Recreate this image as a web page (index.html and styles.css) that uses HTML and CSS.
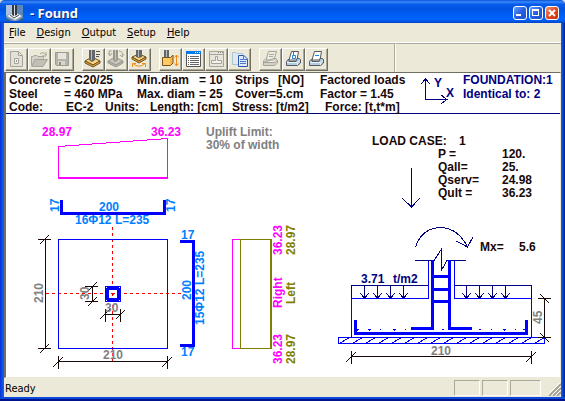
FILE: index.html
```html
<!DOCTYPE html>
<html lang="en">
<head>
<meta charset="utf-8">
<title>- Found</title>
<link rel="stylesheet" href="styles.css">
</head>
<body>
<div class="window">
  <header class="titlebar">
    <svg class="app-icon" width="17" height="16" viewBox="0 0 17 16" aria-hidden="true">
      <rect width="17" height="16" fill="#5b86b8"/>
      <path d="M0 0H7V7L0 11Z" fill="#a9c2dd"/><path d="M0 16V13L5 16ZM12 16L17 13V16Z" fill="#2d5c98"/>
      <path d="M1 11L8 7L16 11L9 15Z" fill="#f4f4f4"/><path d="M1 11L9 15L16 11V12L9 16L1 12Z" fill="#a8aeb5"/>
      <path d="M6 0H11V10L8 11L6 10Z" fill="#303840"/><path d="M8 0H9V11H8Z" fill="#cfd6dc"/>
      <path d="M4 10L8 13L13 10" fill="none" stroke="#46505a"/>
    </svg>
    <h1 class="title">- Found</h1>
    <div class="caption-buttons">
      <button class="caption" aria-label="Minimize"><svg width="12" height="12" viewBox="0 0 12 12"><path d="M2 7H7V9H2Z" fill="#fff"/></svg></button>
      <button class="caption" aria-label="Maximize"><svg width="12" height="12" viewBox="0 0 12 12"><path d="M2 2H9V9H2ZM3 4V8H8V4Z" fill="#fff" fill-rule="evenodd"/></svg></button>
      <button class="caption close" aria-label="Close"><svg width="12" height="12" viewBox="0 0 12 12"><path d="M3 3L9 9M9 3L3 9" stroke="#fff" stroke-width="2"/></svg></button>
    </div>
  </header>

  <nav class="menu">
    <a href="#"><u>F</u>ile</a>
    <a href="#"><u>D</u>esign</a>
    <a href="#"><u>O</u>utput</a>
    <a href="#"><u>S</u>etup</a>
    <a href="#"><u>H</u>elp</a>
  </nav>

  <div class="toolbar">
    <div class="tools">
      <div class="group">
        <button class="tool" aria-label="New"><svg width="21" height="21" viewBox="1 1 21 21"><path d="M5.500 3.500H13.500L17.500 7.500V18.500H5.500ZM13.500 3.500V7.500H17.500" fill="#e4e2d8" stroke="#a5a49c"/><path d="M9.500 10.500H13.500V15.500H9.500Z" fill="#f2f1ea" stroke="#a5a49c"/><path d="M11 12H12V14H11Z" fill="#999"/></svg></button>
        <button class="tool" aria-label="Open"><svg width="21" height="21" viewBox="1 1 21 21"><path d="M3.500 17V8.500H5L6 7.500H9L10 8.500H15.500V10.500" fill="#d4d2c8" stroke="#a5a49c"/><path d="M3.500 18.500L7 11.500H19.500L15 18.500Z" fill="#c2c0b6" stroke="#a5a49c"/><path d="M12 6Q15 3 18 7M18 4V8H14" fill="none" stroke="#a5a49c"/></svg></button>
        <button class="tool" aria-label="Save"><svg width="21" height="21" viewBox="1 1 21 21"><path d="M4.500 4.500H17.500V17.500H5.500L4.500 16.500Z" fill="#b5b4ab" stroke="#9c9b93"/><path d="M7 5H15V11H7Z" fill="#e8e6dc"/><path d="M7 13H14V17H7Z" fill="#d8d6cc"/><path d="M8 14H10V17H8Z" fill="#8f8e87"/></svg></button>
      </div>
      <div class="group">
        <button class="tool" aria-label="Footing data"><svg width="21" height="21" viewBox="1 1 21 21"><path d="M3 13L10 9L18 13L11 17Z" fill="#ffd27a" stroke="#6c5420"/><path d="M3 13V15L11 19L18 15V13L11 17Z" fill="#e9a63c" stroke="#6c5420"/><path d="M7 2H13V12L10 14L7 12Z" fill="#62676b"/><path d="M9.500 2V12" stroke="#b8bcbd"/><path d="M14 3.500H18M14 6.500H18M14 8.500H17" stroke="#555"/></svg></button>
        <button class="tool" aria-label="Loads"><svg width="21" height="21" viewBox="1 1 21 21"><path d="M3 13L10 9L18 13L11 17Z" fill="#c8c6bd" stroke="#9b9a93"/><path d="M3 13V15L11 19L18 15V13L11 17Z" fill="#b5b3aa" stroke="#9b9a93"/><path d="M8 2H13V12L10 14L8 12Z" fill="#98978f"/><path d="M10.500 2V12" stroke="#c9c8c0"/><path d="M7 3H4L5 7M3 5L5 8L7 5M14 3Q19 4 17 8M15 7L17 9L19 6" fill="none" stroke="#aaa9a1"/></svg></button>
        <button class="tool" aria-label="Rotate"><svg width="21" height="21" viewBox="1 1 21 21"><path d="M4 9L11 6L18 9L11 13Z" fill="#ffd27a" stroke="#6c5420"/><path d="M4 9V11L11 15L18 11V9L11 13Z" fill="#e9a63c" stroke="#6c5420"/><path d="M8 2H14V9L11 10L8 9Z" fill="#62676b"/><path d="M10.500 2V9" stroke="#b8bcbd"/><path d="M5 15.500Q11 21 17 15.500M4.500 19V15.500H8M17.500 19V15.500H14" fill="none" stroke="#f48a16"/></svg></button>
      </div>
      <div class="group">
        <button class="tool" aria-label="Depth"><svg width="21" height="21" viewBox="1 1 21 21"><path d="M5 2H10V10H5Z" fill="#62676b"/><path d="M7.500 2V10" stroke="#b8bcbd"/><path d="M3.500 9.500H11.500L14 7V15L11.500 17.500H3.500Z" fill="#f4b649" stroke="#76541a"/><path d="M4 10H11V17H4Z" fill="#ffc965"/><path d="M17.500 7V18M15.500 9.500L17.500 7L19.500 9.500M15.500 15.500L17.500 18L19.500 15.500" fill="none" stroke="#f48a16"/></svg></button>
        <button class="tool" aria-label="Results table"><svg width="21" height="21" viewBox="1 1 21 21"><path d="M4.500 3.500H18.500V18.500H4.500Z" fill="#fff" stroke="#555"/><path d="M4 3H19V6H4Z" fill="#0878e8"/><path d="M13 4.500H14M15 4.500H16M17 4.500H18" stroke="#fff"/><path d="M6 8.500H7M8 8.500H17M6 10.500H7M8 10.500H17M6 12.500H7M8 12.500H17M6 14.500H7M8 14.500H17M6 16.500H7M8 16.500H17" stroke="#666"/></svg></button>
        <button class="tool" aria-label="Drawing"><svg width="21" height="21" viewBox="1 1 21 21"><path d="M4.500 3.500H18.500V18.500H4.500ZM4 6.500H19" fill="#e8e6dc" stroke="#a5a49c"/><path d="M13 4.500H14M15 4.500H16M17 4.500H18" stroke="#8d8c85"/><path d="M10.500 8.500H12.500V12.500H16.500V15.500H6.500V12.500H10.500Z" fill="#f2f1ea" stroke="#a5a49c"/></svg></button>
        <button class="tool" aria-label="Copy"><svg width="21" height="21" viewBox="1 1 21 21"><path d="M4.500 4.500H8L9 5.500H14.500V16.500H4.500Z" fill="#dfe8ef" stroke="#a9c5d8"/><path d="M10.500 7.500H16L19.500 11V18.500H10.500Z" fill="#dce9ff" stroke="#2c55ac"/><path d="M15.500 7.500V11.500H19.500M12 11.500H15M12 13.500H18M12 15.500H18" fill="none" stroke="#4d77ca"/></svg></button>
      </div>
      <div class="group">
        <button class="tool" aria-label="Print preview"><svg width="21" height="21" viewBox="1 1 21 21"><path d="M9.500 3.500H17.500L15 12H7Z" fill="#eceae1" stroke="#a5a49c"/><path d="M10 6.500H15M10 8.500H14" stroke="#aaa9a1"/><path d="M4.500 13L7 10.500M15 10.500H17L18.500 12.500L16 14.500H4.500ZM4.500 13V17.500H15.500L18.500 15V12.500" fill="#d3d1c7" stroke="#a5a49c"/></svg></button>
        <button class="tool" aria-label="Print drawing"><svg width="21" height="21" viewBox="1 1 21 21"><path d="M9.500 3.500H16.500L15 12H7Z" fill="#fff" stroke="#555"/><path d="M11.500 4V7M10.500 7.500H13.500V10.500H10.500Z" fill="#fff" stroke="#1687ec"/><path d="M7 11.500H6L4.500 13.500V17.500H15.500L18.500 15V11.500L17 10.500H15L14 13.500H7Z" fill="#b5ccdd" stroke="#505b68"/><path d="M5 14.500H15.500L18 12.500M15.500 14.500V17" fill="none" stroke="#e9f3fa"/></svg></button>
        <button class="tool" aria-label="Print"><svg width="21" height="21" viewBox="1 1 21 21"><path d="M9.500 3.500H16.500L15 12H7Z" fill="#fff" stroke="#555"/><path d="M10 7.500H14" stroke="#1687ec"/><path d="M7 11.500H6L4.500 13.500V17.500H15.500L18.500 15V11.500L17 10.500H15L14 13.500H7Z" fill="#b5ccdd" stroke="#505b68"/><path d="M5 14.500H15.500L18 12.500M15.500 14.500V17" fill="none" stroke="#e9f3fa"/></svg></button>
      </div>
    </div>
    <div class="tools-rest"></div>
  </div>

  <main class="canvas">
    <section class="summary">
      <div class="params">
        <div class="row materials">
          <span>Concrete</span><span>= C20/25</span><span>Min.diam</span><span>= 10</span><span>Strips</span><span>[NO]</span><span>Factored loads</span>
        </div>
        <div class="row materials">
          <span>Steel</span><span>= 460 MPa</span><span>Max. diam</span><span>= 25</span><span>Cover=5.cm</span><span></span><span>Factor = 1.45</span>
        </div>
        <div class="row units">
          <span>Code:</span><span>EC-2</span><span>Units:</span><span>Length: [cm]</span><span>Stress: [t/m2]</span><span>Force: [t,t*m]</span>
        </div>
      </div>
      <svg class="axes" width="40" height="38" viewBox="418 74 40 38">
        <path d="M425.500 80V100.500H447M421 85L425.500 80L430 85M441 96L447 100.500L441 105" fill="none" stroke="#000080" shape-rendering="crispEdges"/>
        <text x="434" y="88">Y</text><text x="446" y="98">X</text>
      </svg>
      <div class="ident"><span>FOUNDATION:1</span><span>Identical to: 2</span></div>
    </section>

    <svg class="drawing" viewBox="6 114 554 263" preserveAspectRatio="xMinYMin meet" role="img" aria-label="Foundation plan and section">
      <!-- soil pressure, top edge -->
      <g class="magenta">
        <path d="M58.500 178V146.500L167.500 138.500V178"/><path class="w2" d="M58 178H168"/>
        <text x="42" y="136">28.97</text><text x="151" y="136">36.23</text>
      </g>
      <g class="gray"><text x="206" y="136">Uplift Limit:</text><text x="206" y="149">30% of width</text></g>

      <!-- bars along X -->
      <path class="bar" d="M61.500 200V213.500H164.500V200"/>
      <g class="sky">
        <text x="99" y="211">200</text><text x="75" y="224">16Φ12 L=235</text>
        <text transform="translate(59 212) rotate(-90)">17</text>
        <text transform="translate(175 212) rotate(-90)">17</text>
      </g>

      <!-- plan -->
      <path class="axis" d="M112.500 227V362M46 293.500H181"/>
      <path class="blue" d="M58.500 239.500H167.500V348.500H58.500Z"/>
      <path class="bar column" d="M107 288H119V300H107Z"/>
      <path class="corner" d="M106 287.500H107M119 287.500H120M106 300.500H107M119 300.500H120"/>
      <path class="pin" d="M111 293H115L113 296Z"/>
      <path class="dim" d="M45.500 239V348M38 239.500H51M38 348.500H51M40 244L49 235M40 353L49 344"/>
      <path class="dim" d="M58 361.500H168M58.500 356V369M167.500 356V369M53 367L63 357M162 367L172 357"/>
      <path class="dim" d="M105 314.500H121M105.500 309V322M120.500 309V322M100 319L110 309M116 319L125 310"/>
      <path class="dim" d="M92.500 286V302M85 286.500H98M85 301.500H98M88 291L97 282M88 306L97 297"/>
      <g class="gray">
        <text x="103" y="359">210</text><text x="105" y="312">30</text>
        <text transform="translate(43 303) rotate(-90)">210</text>
        <text transform="translate(89 300) rotate(-90)">30</text>
      </g>

      <!-- bars along Y -->
      <path class="bar" d="M180 241.500H193.500V345.500H180"/>
      <g class="sky">
        <text x="181" y="239">17</text><text x="181" y="356">17</text>
        <text transform="translate(191 300) rotate(-90)">200</text>
        <text transform="translate(204 325) rotate(-90)">15Φ12 L=235</text>
      </g>

      <!-- soil pressure, side edge -->
      <g class="magenta">
        <path d="M240 239.500H232.500V348.500H240"/>
        <text transform="translate(282 255) rotate(-90)">36.23</text>
        <text transform="translate(282 308) rotate(-90)">Right</text>
        <text transform="translate(282 364) rotate(-90)">36.23</text>
      </g>
      <g class="olive">
        <path d="M240.500 239.500H271V348.500H240.500Z"/><path class="w2" d="M271 239V349"/>
        <text transform="translate(295 255) rotate(-90)">28.97</text>
        <text transform="translate(295 304) rotate(-90)">Left</text>
        <text transform="translate(295 364) rotate(-90)">28.97</text>
      </g>

      <!-- load case -->
      <g class="ink">
        <text x="372" y="145">LOAD CASE:</text><text x="459" y="145">1</text>
        <text x="438" y="158">P =</text><text x="502" y="158">120.</text>
        <text x="438" y="171">Qall=</text><text x="502" y="171">25.</text>
        <text x="438" y="184">Qserv=</text><text x="502" y="184">24.98</text>
        <text x="438" y="197">Qult =</text><text x="502" y="197">36.23</text>
        <text x="480" y="251">Mx=</text><text x="519" y="251">5.6</text>
      </g>
      <g class="navy">
        <path d="M411.500 168V206M402 198L411.500 207L420 198"/>
        <path d="M415.500 247Q422 228 440.500 227.500Q458 228 467.500 247M456 241L467.500 247L473 237"/>
        <path d="M415 260.500H434L441.500 249V270L447 260.500H466"/>
        <path d="M428 285.500H351.500V298M364.500 286V298M377.500 286V298M390.500 286V298M403.500 286V298"/>
        <path d="M360 293L364.500 298L369 293M373 293L377.500 298L382 293M386 293L390.500 298L395 293M399 293L403.500 298L408 293"/>
        <path d="M455 285.500H531.500V298M466.500 286V298M479.500 286V298M492.500 286V298M505.500 286V298"/>
        <path d="M462 293L466.500 298L471 293M475 293L479.500 298L484 293M488 293L492.500 298L497 293M501 293L505.500 298L510 293"/>
        <text x="361" y="283">3.71</text><text x="393" y="283">t/m2</text>
      </g>

      <!-- section -->
      <path class="blue" d="M428.500 261V298.500H351.500V337M454.500 261V298.500H531.500V337M338.500 337.500H544.500V343.500H338.500Z"/>
      <path class="blue" d="M340 343L349 338M353 343L362 338M366 343L375 338M379 343L388 338M392 343L401 338M405 343L414 338M418 343L427 338M431 343L440 338M444 343L453 338M457 343L466 338M470 343L479 338M483 343L492 338M496 343L505 338M509 343L518 338M522 343L531 338M535 343L544 338"/>
      <path class="bar" d="M432.500 260V328.500H411M449.500 260V328.500H472M434 276.500H448M434 289.500H448M434 301.500H448"/>
      <path class="bar" d="M355.500 320V333.500H526.500V320"/>
      <path class="blue" d="M356 329.500H359M368 329.500H371M380 329.500H381M393 329.500H396M405 329.500H406M418 329.500H419M430 329.500H431M442 329.500H444M454 329.500H455M467 329.500H468M479 329.500H481M491 329.500H492M503 329.500H506M515 329.500H516M523 329.500H525M357.500 330V331M369.500 330V331M394.500 330V331M504.500 330V331"/>
      <path class="dim" d="M351 356.500H532M351.500 351V364M531.500 351V364M346 362L356 352M526 362L536 352"/>
      <path class="dim" d="M544.500 298V338M538 298.500H551M538 337.500H551M540 294L549 303M540 333L549 342"/>
      <g class="gray">
        <text x="431" y="355">210</text>
        <text transform="translate(542 324) rotate(-90)">45</text>
      </g>
    </svg>
  </main>

  <footer class="status">
    <span class="message">Ready</span>
    <span class="pane"></span><span class="pane"></span><span class="pane wide"></span>
    <svg class="grip" width="13" height="13" viewBox="0 0 13 13" aria-hidden="true"><path d="M1 13L13 1M5 13L13 5M9 13L13 9" stroke="#a5a396" stroke-width="2"/><path d="M0 12L12 0M4 12L13 3M8 12L13 7" stroke="#fff"/></svg>
  </footer>
</div>
</body>
</html>
```

FILE: styles.css
```css
* { box-sizing: border-box; }

body {
  margin: 0;
  background: #d8dcd8;
  font-family: "DejaVu Sans Condensed", "DejaVu Sans", sans-serif;
  font-size: 11px;
  color: #000;
}

.window {
  display: flex;
  flex-direction: column;
  min-height: 100vh;
  padding: 0 4px 4px;
  border-radius: 5px 5px 0 0;
  background: linear-gradient(90deg, #0831d9, #1166ee 4px, #1166ee calc(100% - 4px), #001ea0);
  box-shadow: inset 0 -2px #00138c, inset 0 -4px #0a48dc;
}

.titlebar {
  display: flex;
  align-items: center;
  height: 23px;
  margin: 0 -4px;
  padding: 3px 6px 0;
  border-radius: 5px 5px 0 0;
  background: linear-gradient(#0a50d8, #3a8cff 2px, #0a5cea 4px, #0054e3 9px, #0062fb 17px, #0062fb 20px, #0041c4 23px);
}

.title {
  flex: 1;
  margin: 0 0 0 7px;
  color: #fff;
  font: bold 13px/18px "Noto Sans", sans-serif;
  text-shadow: 1px 1px #0a2a80;
}

.caption-buttons { display: flex; gap: 2px; }

.caption {
  width: 14px;
  height: 14px;
  padding: 0;
  border: 1px solid #fff;
  border-radius: 3px;
  background: linear-gradient(135deg, #6c9cff, #2560e0 50%, #1c50d0);
}
.caption svg { display: block; }
.close { background: linear-gradient(135deg, #f09878, #e04a20 50%, #c83008); }

.menu {
  display: flex;
  gap: 11px;
  height: 19px;
  padding: 0 5px;
  background: #ece9d8;
  line-height: 19px;
}
.menu a { color: #000; text-decoration: none; }

.toolbar {
  display: flex;
  height: 30px;
  border-top: 1px solid #fff;
  background: #ece9d8;
}
.tools {
  display: flex;
  gap: 8px;
  width: 391px;
  padding: 4px 1px 0;
  border-top: 1px solid #aca899;
  border-right: 1px solid #aca899;
}
.tools-rest {
  flex: 1;
  border-top: 1px solid #aca899;
  border-left: 1px solid #fff;
}
.group { display: flex; }

.tool {
  width: 23px;
  height: 23px;
  padding: 0;
  border: 1px solid;
  border-color: #fff #716f64 #716f64 #fff;
  background: #ece9d8;
  box-shadow: inset -1px -1px #aca899;
}
.tool svg { display: block; }

.canvas {
  flex: 1;
  margin: 0;
  border: 1px solid;
  border-color: #716f64 #ece9d8 #ece9d8 #716f64;
  border-left-width: 2px;
  background: #fff;
}

.summary {
  display: flex;
  height: 41px;
  border-bottom: 1px solid #000080;
  color: #180808;
  font: bold 12px/14px "Liberation Sans", sans-serif;
  white-space: nowrap;
}
.params { width: 412px; padding: 0 3px; }
.row { display: grid; }
.materials { grid-template-columns: 55px 73px 62px 36px 43px 42px 1fr; }
.units {
  grid-template-columns: 57px 39px 45px 82px 93px 1fr;
  line-height: 13px;
}
.axes { display: block; fill: #000080; }
.ident {
  display: flex;
  flex-direction: column;
  padding: 0 5px;
  color: #000080;
}

.drawing {
  display: block;
  width: 100%;
  height: auto;
  font: bold 12px "Liberation Sans", sans-serif;
}
.drawing path {
  fill: none;
  stroke: currentColor;
  shape-rendering: crispEdges;
}
.drawing text { fill: currentColor; }
.magenta { color: #ff00ff; }
.gray { color: #808080; }
.sky { color: #0080ff; }
.olive { color: #808000; }
.navy { color: #000080; }
.ink, .dim { color: #180808; }
.blue, .bar { color: #0000ff; }
.drawing .corner { stroke: #fff; }
.axis { color: #ff0000; stroke-dasharray: 3 3; }
.drawing .w2 { stroke-width: 2; }
.drawing .bar { stroke-width: 3; }
.drawing .column { stroke-width: 4; }
.drawing .pin { fill: #ff0000; stroke: none; }

.status {
  display: flex;
  gap: 2px;
  height: 19px;
  padding: 2px 0 1px 1px;
  background: #ece9d8;
  line-height: 17px;
}
.message { flex: 1; }
.pane {
  width: 26px;
  border: 1px solid;
  border-color: #aca899 #fff #fff #aca899;
}
.wide { width: 31px; }
.grip { align-self: flex-end; margin-left: 5px; }
```
